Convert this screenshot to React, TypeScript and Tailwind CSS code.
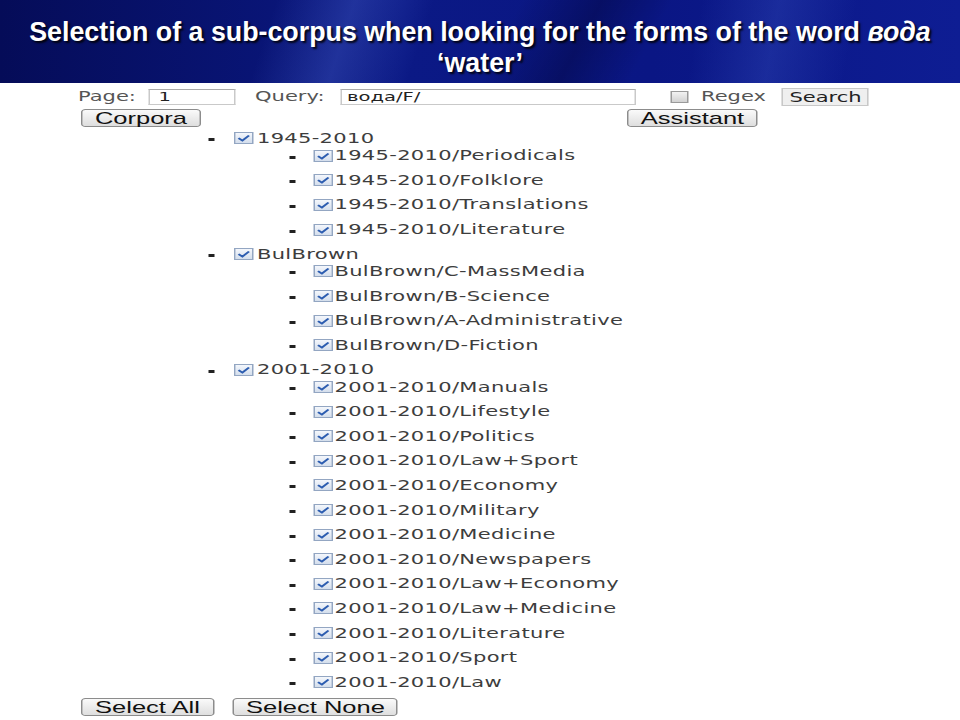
import React from 'react';

const groups: { name: string; children: string[] }[] = [
  {
    name: '1945-2010',
    children: ['Periodicals', 'Folklore', 'Translations', 'Literature'],
  },
  {
    name: 'BulBrown',
    children: ['C-MassMedia', 'B-Science', 'A-Administrative', 'D-Fiction'],
  },
  {
    name: '2001-2010',
    children: [
      'Manuals',
      'Lifestyle',
      'Politics',
      'Law+Sport',
      'Economy',
      'Military',
      'Medicine',
      'Newspapers',
      'Law+Economy',
      'Law+Medicine',
      'Literature',
      'Sport',
      'Law',
    ],
  },
];

const Check: React.FC = () => (
  <span className="flex-none w-[13px] h-[12px] border border-[#93a6c2] bg-[linear-gradient(#f4f7fc,#d4deec)] flex items-center justify-center">
    <svg width="11" height="10" viewBox="0 0 11 10">
      <path d="M2 5.2 L4.6 7.6 L9 2.4" fill="none" stroke="#2d5db0" strokeWidth="1.6" />
    </svg>
  </span>
);

const Bullet: React.FC = () => <span className="flex-none w-[4px] h-[3px] bg-[#222] mt-[3px]" />;

const Btn: React.FC<{ label: string; w: string }> = ({ label, w }) => (
  <button
    className={`${w} h-[18px] flex-none flex items-center justify-center pt-[1px] rounded-[3px] border border-[#8c8c8c] bg-[linear-gradient(#fafafa,#dedede)] font-['Liberation_Sans',Arial,sans-serif] text-[17px] leading-none text-[#111]`}
  >
    {label}
  </button>
);

export default function App() {
  return (
    <div className="w-[960px] h-[720px] bg-white overflow-hidden">
      <header className="h-[83px] pt-[17px] text-center text-white font-['Liberation_Sans',Arial,sans-serif] font-bold text-[26.8px] leading-[31px] [text-shadow:2px_2px_2px_rgba(0,0,0,0.85)] bg-[linear-gradient(108deg,transparent_28%,rgba(90,120,230,0.28)_36%,transparent_44%),linear-gradient(118deg,transparent_52%,rgba(0,0,40,0.35)_60%,transparent_67%),linear-gradient(100deg,transparent_72%,rgba(70,100,210,0.25)_80%,transparent_88%),linear-gradient(90deg,#050c58,#0b1985_42%,#0a1684_68%,#0e1d93)]">
        Selection of a sub-corpus when looking for the forms of the word <i>вода</i>
        <br />
        ‘water’
      </header>

      <div className="w-[640px] origin-top-left scale-x-150 font-['DejaVu_Sans',Verdana,sans-serif] text-[14px] text-[#3d3d3d]">
        <div className="mt-[4px] h-[19px] flex items-center pl-[52px]">
          <span className="w-[46.7px] flex-none text-[#555]">Page:</span>
          <span className="w-[58.7px] h-[16px] flex-none border border-[#c9c9c9] border-t-[#aaa] bg-white pl-[6px] text-[13px] leading-[14px] text-[#222]">
            1
          </span>
          <span className="ml-[12.7px] w-[57.3px] flex-none text-[#555]">Query:</span>
          <span className="w-[196.7px] h-[16px] flex-none border border-[#c9c9c9] border-t-[#aaa] bg-white pl-[3px] text-[13px] leading-[14px] text-[#222]">
            вода/F/
          </span>
          <span className="ml-[23.3px] w-[12px] h-[12px] flex-none border border-[#9a9a9a] bg-[linear-gradient(#f2f2f2,#d2d2d2)]" />
          <span className="ml-[8px] w-[54px] flex-none text-[#555]">Regex</span>
          <button className="w-[58px] h-[18px] flex-none border border-[#c8c8c8] bg-[#efefef] text-[14px] leading-none text-[#222]">
            Search
          </button>
        </div>

        <div className="mt-[3px] flex pl-[54px]">
          <Btn label="Corpora" w="w-[80px]" />
          <span className="w-[284px] flex-none" />
          <Btn label="Assistant" w="w-[87.3px]" />
        </div>

        <ul className="mt-[2.8px] tracking-[0.22px]">
          {groups.map((g) => (
            <li key={g.name}>
              <div className="h-[17.3px] flex items-center">
                <span className="w-[139.3px] flex-none" />
                <Bullet />
                <span className="w-[13px] flex-none" />
                <Check />
                <span className="ml-[2px]">{g.name}</span>
              </div>
              <ul>
                {g.children.map((c) => (
                  <li key={c} className="h-[17.3px] mb-[7.3px] flex items-center">
                    <span className="w-[192.7px] flex-none" />
                    <Bullet />
                    <span className="w-[12.3px] flex-none" />
                    <Check />
                    <span className="ml-[1px]">
                      {g.name}/{c}
                    </span>
                  </li>
                ))}
              </ul>
            </li>
          ))}
        </ul>

        <div className="mt-[3px] flex pl-[54px] gap-[12.6px]">
          <Btn label="Select All" w="w-[88.7px]" />
          <Btn label="Select None" w="w-[110px]" />
        </div>
      </div>
    </div>
  );
}
